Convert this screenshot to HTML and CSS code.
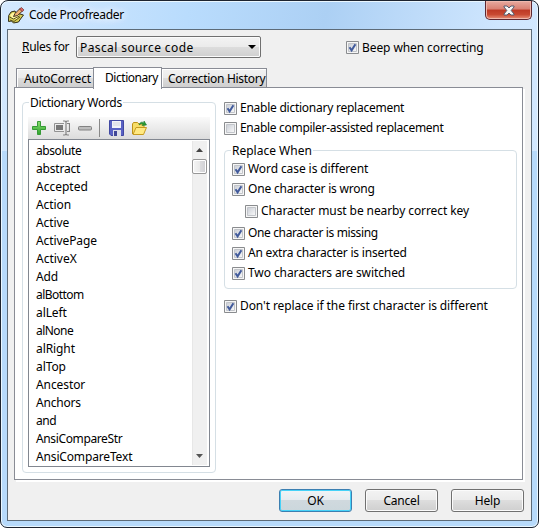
FILE: index.html
```html
<!DOCTYPE html>
<html lang="en">
<head>
<meta charset="utf-8">
<title>Code Proofreader</title>
<link rel="stylesheet" href="styles.css">
</head>
<body>
<svg width="0" height="0" class="defs"><defs>
<linearGradient id="box" x2="1" y2="1"><stop stop-color="#c9cdd5"/><stop offset="1" stop-color="#fafafa"/></linearGradient>
<linearGradient id="grn" x2="0" y2="1"><stop stop-color="#8ade70"/><stop offset="1" stop-color="#2ea32c"/></linearGradient>
<symbol id="off" viewBox="0 0 13 13"><path d="M.5.5h12v12H.5z" fill="#f6f6f6" stroke="#8a8c8f"/><path d="M2.5 2.5h8v8h-8z" fill="url(#box)" stroke="#c2c5ca"/></symbol>
<symbol id="on" viewBox="0 0 13 13"><use href="#off"/><path d="M3.500 6.200 5.600 9.300 9.400 3.200" fill="none" stroke="#425b9c" stroke-width="2"/></symbol>
</defs></svg>
<div class="window">
  <header class="titlebar">
    <svg class="app-icon" width="17" height="17" viewBox="0 0 17 17"><path d="M.7 8.500 3 5l4-1 1 2 4 1 3.500 1-3 4-2 3-5 1-2-2-3 .5z" fill="#d9cf55" stroke="#302c16"/><path d="m2 8 3-2.500 6 3-2 3.500-5-.5z" fill="#fff6a0"/><path d="m2 13 4 1.500 6-4.500M1.500 10l4 2 6-3" fill="none" stroke="#4c461c" stroke-width=".9"/><path d="m5.500 9.500 1.500-3 5-5 2.500 2.500-5 4.500z" fill="#eeb272" stroke="#33251b" stroke-width=".9"/><path d="m11.500 2 2-1.500L16 3l-1.800 1.700z" fill="#dd6260" stroke="#5a2424" stroke-width=".6"/></svg>
    <h1>Code Proofreader</h1>
    <button class="close" aria-label="Close"><svg width="12" height="11" viewBox="0 0 12 11"><path d="M1 1h3l2 2 2-2h3v1L8.200 5.500 11 9v1H8L6 8l-2 2H1V9l2.800-3.500L1 2z" fill="#f7f7f7" stroke="#555d70"/></svg></button>
  </header>
  <main class="client">
    <div class="rules">
      <span class="rules-label tight3"><u>R</u>ules for</span>
      <div class="combo"><span>Pascal source code</span><svg width="8" height="4" viewBox="0 0 8 4"><path d="M0 0h8L4 4z"/></svg></div>
      <label class="check beep"><svg><use href="#on"/></svg><span>Beep when correcting</span></label>
    </div>
    <nav class="tabs"><span class="tab auto">AutoCorrect</span><span class="tab active">Dictionary</span><span class="tab history tight3">Correction History</span></nav>
    <section class="page">
      <div class="group words">
        <div class="legend tight3">Dictionary Words</div>
        <div class="toolbar">
          <svg width="14" height="14" viewBox="0 0 14 14"><path d="M5.500.5h3v5h5v3h-5v5h-3v-5h-5v-3h5z" fill="url(#grn)" stroke="#369a36"/></svg>
          <svg width="16" height="16" viewBox="0 0 16 16"><path d="M10 3.500H.5v8H10" fill="#ececec" stroke="#929292"/><path d="M2 5h7v5H2z" fill="#777"/><path d="M9 1h2l1 1 1-1h2M12 2v12M9 15h2l1-1 1 1h2M13 3.500h2.500v8H13" fill="none" stroke="#858585" stroke-width="1.200"/></svg>
          <svg width="14" height="5" viewBox="0 0 14 5"><rect x=".5" y=".5" width="13" height="3.500" rx="1" fill="#bdbdbd" stroke="#828282"/></svg>
          <i class="sep"></i>
          <svg width="15" height="16" viewBox="0 0 15 16"><path d="M.5.5h14v15H2L.5 14z" fill="#5961c4" stroke="#4148a2"/><path d="M3 1h9v7H3z" fill="#f1f2f8"/><path d="M4 3h7M4 5h7" stroke="#d2d4df"/><path d="M4 10h8v6H4z" fill="#dddfe9"/><path d="M5 11h3v5H5z" fill="#414797"/></svg>
          <svg width="15" height="15" viewBox="0 0 15 15"><path d="M.5 13V3l1-1.500h4L7 3h5v3" fill="#f7dd68" stroke="#bd9218"/><path d="m1 13.500 3-7h10.500l-3 7z" fill="#ffe982" stroke="#c79b20"/><path d="M7 4c1-3 3-3.500 5-2V0l2.500 4-4.500.5 1-1C9.500 2 8.500 3 7 4z" fill="#2b9b35" stroke="#187c28" stroke-width=".6"/></svg>
        </div>
        <div class="list">
          <ul>
            <li class="tight4">absolute</li><li class="tight2">abstract</li><li class="normal">Accepted</li><li>Action</li><li>Active</li><li>ActivePage</li><li class="normal">ActiveX</li><li class="tight2">Add</li><li class="tight5">alBottom</li><li>alLeft</li><li class="tight5">alNone</li><li>alRight</li><li>alTop</li><li>Ancestor</li><li class="tight2">Anchors</li><li class="tight4">and</li><li class="tight35">AnsiCompareStr</li><li class="tight15">AnsiCompareText</li>
          </ul>
          <div class="scroll"><svg width="7" height="4" viewBox="0 0 7 4"><path d="M0 4 3.500 0 7 4z" fill="#444"/></svg><i class="thumb"></i><svg class="down" width="7" height="4" viewBox="0 0 7 4"><path d="M0 0h7L3.500 4z" fill="#555"/></svg></div>
        </div>
      </div>
      <div class="options">
        <label class="check tight25"><svg><use href="#on"/></svg><span>Enable dictionary replacement</span></label>
        <label class="check tight3"><svg><use href="#off"/></svg><span>Enable compiler-assisted replacement</span></label>
        <div class="group when">
          <div class="legend normal">Replace When</div>
          <label class="check"><svg><use href="#on"/></svg><span>Word case is different</span></label>
          <label class="check tight2"><svg><use href="#on"/></svg><span>One character is wrong</span></label>
          <label class="check nearby"><svg><use href="#off"/></svg><span>Character must be nearby correct key</span></label>
          <label class="check tight35"><svg><use href="#on"/></svg><span>One character is missing</span></label>
          <label class="check tight2"><svg><use href="#on"/></svg><span>An extra character is inserted</span></label>
          <label class="check"><svg><use href="#on"/></svg><span>Two characters are switched</span></label>
        </div>
        <label class="check"><svg><use href="#on"/></svg><span>Don't replace if the first character is different</span></label>
      </div>
    </section>
    <footer><button class="btn primary">OK</button><button class="btn">Cancel</button><button class="btn">Help</button></footer>
  </main>
</div>
</body>
</html>
```
FILE: styles.css
```css
*{box-sizing:border-box}
body{margin:0;background:#fff;font:12px/18px "Noto Sans","Open Sans",sans-serif;letter-spacing:-.09px;color:#000;overflow:hidden}
.defs{position:absolute}
svg{display:block;flex:none}
.normal{letter-spacing:0}
.tight15{letter-spacing:-.15px}
.tight2{letter-spacing:-.2px}
.tight25{letter-spacing:-.25px}
.tight3{letter-spacing:-.3px}
.tight35{letter-spacing:-.37px}
.tight4{letter-spacing:-.43px}
.tight5{letter-spacing:-.53px}
.window{width:539px;height:528px;border:1px solid #1d2430;border-radius:8px 8px 7px 7px;padding:0 6px 6px 6px;background:linear-gradient(#dceeff00 0 150px,#b7dafb 150px),linear-gradient(100deg,#d5e9fe 0,#b9dcfd 30%,#acd0f4 52%,#cfe6fe 80%,#d5e9ff);box-shadow:inset 0 0 0 1px #eaf7ff}
.titlebar{height:28px;display:flex;align-items:flex-start;padding:6px 0 0 1px}
h1{font:inherit;letter-spacing:-.33px;margin:-1px 0 0 4px;text-shadow:0 0 8px #fff,0 0 8px #fff;white-space:nowrap}
.close{margin:-6px 0 0 auto;width:47px;height:19px;border:1px solid #5d2731;border-top:0;border-radius:0 0 5px 5px;background:linear-gradient(#e7aaa0 0,#d98072 45%,#bd3925 50%,#c84932 75%,#e89078);box-shadow:inset 0 0 0 1px #efb8ad;display:flex;justify-content:center;align-items:center;padding:0}
.client{width:525px;height:492px;border:1px solid #5d6b78;background:#f0f0f0;padding:6px 0 0 6px}
.rules{display:flex;height:22px;align-items:center;padding-left:8px;white-space:nowrap}
.rules-label{width:54px;margin-top:-1px}
.combo{width:185px;height:22px;border:1px solid #707070;border-radius:2px;background:linear-gradient(#f3f3f3,#ebebeb 50%,#dddddd 50%,#cfcfcf);box-shadow:inset 0 0 0 1px #fbfbfb;padding:0 4px 0 3px;display:flex;align-items:center;justify-content:space-between;letter-spacing:.4px}
.combo span{padding-top:1px}
.check{display:flex;align-items:center;height:20px;gap:3px;white-space:nowrap}
.check svg{width:13px;height:13px}
.beep{margin-left:85px}
.beep span{padding-top:2px}
.tabs{display:flex;align-items:flex-end;height:22px;margin-top:8px;padding-left:2px;white-space:nowrap}
.tab{height:19px;border:1px solid #898c95;border-bottom:0;background:linear-gradient(#f2f2f2,#ebebeb 50%,#dddddd 50%,#cfcfcf);padding-left:7px;box-shadow:inset 1px 1px #fff;margin-bottom:1px;line-height:20px}
.auto{width:78px;border-right:0}
.active{width:69px;height:22px;background:#fff;padding-left:11px;margin:0 0 -1px -1px;position:relative;z-index:1;letter-spacing:-.45px}
.history{width:105px;border-left:0;padding-left:6px}
.page{width:509px;height:393px;margin-top:-1px;border:1px solid #898c95;background:#fff;box-shadow:2px 2px #fff;padding:14px 5px 7px 7px;display:flex;gap:8px}
.group{border:1px solid #d5dfe5;border-radius:4px}
.words{width:194px;height:371px;padding:0 5px;flex:none}
.legend{width:max-content;height:18px;margin-top:-10px;background:#fff;padding:0 1px;white-space:nowrap}
.words .legend{margin-left:1px;line-height:20px}
.toolbar{height:22px;margin-top:6px;background:linear-gradient(#fafafa,#dcdcdc);display:flex;align-items:center;padding-left:4px}
.toolbar svg:nth-of-type(2){margin-left:8px}
.toolbar svg:nth-of-type(3){margin-left:8px}
.sep{width:1px;height:18px;background:#888;margin:0 9px 0 7px}
.toolbar svg:nth-of-type(5){margin-left:8px}
.list{width:182px;height:328px;border:1px solid #828790;display:flex;justify-content:space-between;padding:1px 2px 1px 1px}
ul{margin:0;padding:1px 0 0 6px;list-style:none}
li{height:18px}
.scroll{width:15px;background:#f0f0f0;display:flex;flex-direction:column;align-items:center;padding-top:7px;box-shadow:inset 1px 0 #e7e7e7}
.thumb{width:15px;height:15px;border:1px solid #979797;border-radius:2px;background:linear-gradient(90deg,#f5f5f5,#eaeaea 50%,#dcdcde 55%,#d0d0d4);box-shadow:inset 0 0 0 1px #fff;margin-top:7px}
.down{margin:auto 0 7px}
.options{width:293px;flex:none;margin-top:-4px}
.when{height:139px;margin:12px 0 7px;padding-left:7px}
.when .legend{margin-left:-1px;line-height:20px}
.nearby{margin:2px 0 2px 13px}
footer{display:flex;justify-content:flex-end;gap:13px;margin-top:9px;padding-right:7px}
.btn{width:73px;height:23px;padding:0;border:1px solid #707070;border-radius:3px;background:linear-gradient(#f3f3f3,#ebebeb 50%,#dddddd 50%,#cfcfcf);box-shadow:inset 0 0 0 1px #fbfbfb;font:inherit;letter-spacing:-.2px;color:#000}
.primary{border-color:#3c7fb1;box-shadow:inset 0 0 0 1px #46d2f8;background:linear-gradient(#f0f4f6,#e5ebef 50%,#d0d9de 50%,#cbd7dc)}
```
